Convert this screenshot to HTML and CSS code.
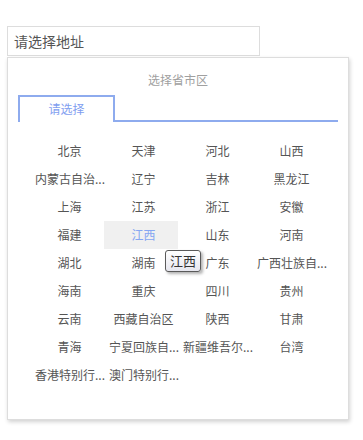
FILE: index.html
```html
<!DOCTYPE html>
<html lang="zh-CN">
<head>
    <meta charset="UTF-8">
    <meta name="viewport" content="width=device-width, initial-scale=1.0">
    <title>选择地址</title>
    <link rel="stylesheet" href="styles.css">
</head>
<body>

<div class="wrapper">
    <div class="address-input">请选择地址</div>

    <div class="picker">
        <div class="picker-title">选择省市区</div>

        <div class="tabs">
            <span class="tab">请选择</span>
        </div>

        <!-- 省份列表 (长名称截断显示) -->
        <ul class="region-list">
            <li>北京</li>
            <li>天津</li>
            <li>河北</li>
            <li>山西</li>
            <li title="内蒙古自治区">内蒙古自治...</li>
            <li>辽宁</li>
            <li>吉林</li>
            <li>黑龙江</li>
            <li>上海</li>
            <li>江苏</li>
            <li>浙江</li>
            <li>安徽</li>
            <li>福建</li>
            <li class="active">江西<span class="tooltip">江西</span></li>
            <li>山东</li>
            <li>河南</li>
            <li>湖北</li>
            <li>湖南</li>
            <li>广东</li>
            <li title="广西壮族自治区">广西壮族自...</li>
            <li>海南</li>
            <li>重庆</li>
            <li>四川</li>
            <li>贵州</li>
            <li>云南</li>
            <li>西藏自治区</li>
            <li>陕西</li>
            <li>甘肃</li>
            <li>青海</li>
            <li title="宁夏回族自治区">宁夏回族自...</li>
            <li title="新疆维吾尔自治区">新疆维吾尔...</li>
            <li>台湾</li>
            <li title="香港特别行政区">香港特别行...</li>
            <li title="澳门特别行政区">澳门特别行...</li>
        </ul>
    </div>
</div>

</body>
</html>
```

FILE: styles.css
```css
body {
    margin: 0;
    padding: 0;
    background-color: #fff;
    font-family: "Noto Sans CJK SC", "Noto Sans", sans-serif;
    color: #555;
}
.wrapper {
    padding: 26px 7px;
}
.address-input {
    width: 253px;
    height: 30px;
    box-sizing: border-box;
    border: 1px solid #ddd;
    padding-left: 6px;
    font-size: 14px;
    line-height: 28px;
    color: #555;
}
.picker {
    width: 342px;
    box-sizing: border-box;
    margin-top: 1px;
    border: 1px solid #ddd;
    padding: 13px 10px 30px;
    background-color: #fff;
    box-shadow: 1px 2px 4px rgba(0, 0, 0, 0.18);
}
.picker-title {
    text-align: center;
    font-size: 12px;
    line-height: 18px;
    color: #a0a0a0;
}
.tabs {
    margin-top: 6px;
    height: 25px;
    border-bottom: 2px solid #8eabee;
}
.tab {
    display: inline-block;
    width: 97px;
    height: 27px;
    box-sizing: border-box;
    border: 2px solid #8eabee;
    border-bottom: none;
    padding-bottom: 2px;
    background-color: #fff;
    text-align: center;
    font-size: 12px;
    line-height: 23px;
    color: #7f9ef0;
}
.region-list {
    list-style: none;
    width: 296px;
    margin: 15px auto 0;
    padding: 0;
    display: grid;
    grid-template-columns: repeat(4, 74px);
}
.region-list li {
    position: relative;
    height: 28px;
    box-sizing: border-box;
    padding-left: 5px;
    font-size: 12px;
    line-height: 28px;
    text-align: center;
    white-space: nowrap;
    cursor: pointer;
}
.region-list li.active {
    background-color: #f0f0f0;
    color: #86a6f2;
}
.tooltip {
    position: absolute;
    left: 61px;
    top: 29px;
    width: 36px;
    height: 22px;
    box-sizing: border-box;
    border: 1px solid #5a5a5a;
    border-radius: 3px;
    background: linear-gradient(#ffffff, #e6e6ee);
    box-shadow: 2px 2px 3px rgba(0, 0, 0, 0.3);
    font-size: 13px;
    line-height: 20px;
    text-align: center;
    color: #333;
    z-index: 2;
}
```
